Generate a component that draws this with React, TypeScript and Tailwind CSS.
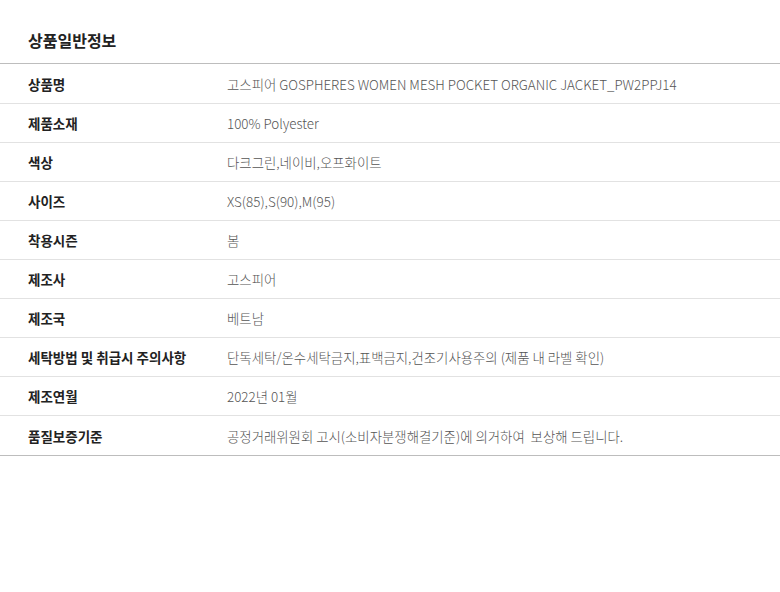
import React from 'react';

interface InfoRow {
  label: string;
  value: string;
}

const rows: InfoRow[] = [
  { label: '상품명', value: '고스피어 GOSPHERES WOMEN MESH POCKET ORGANIC JACKET_PW2PPJ14' },
  { label: '제품소재', value: '100% Polyester' },
  { label: '색상', value: '다크그린,네이비,오프화이트' },
  { label: '사이즈', value: 'XS(85),S(90),M(95)' },
  { label: '착용시즌', value: '봄' },
  { label: '제조사', value: '고스피어' },
  { label: '제조국', value: '베트남' },
  { label: '세탁방법 및 취급시 주의사항', value: '단독세탁/온수세탁금지,표백금지,건조기사용주의 (제품 내 라벨 확인)' },
  { label: '제조연월', value: '2022년 01월' },
  { label: '품질보증기준', value: '공정거래위원회 고시(소비자분쟁해결기준)에 의거하여  보상해 드립니다.' },
];

const App = () => {
  return (
    <div className="w-[780px] h-[592px] bg-white font-['Noto_Sans_CJK_KR','Noto_Sans',sans-serif]">
      <div className="pt-[30px]">
        <h2 className="px-7 pb-[12px] text-[16px] leading-[21px] font-bold text-[#222]">상품일반정보</h2>
        <div className="border-t border-b border-[#bdbdbd]">
          {rows.map((row, i) => (
            <div
              key={row.label}
              className={`flex items-center pt-px ${i === rows.length - 1 ? 'h-[40px]' : 'h-[39px]'} ${i > 0 ? 'border-t border-[#e2e2e2]' : ''}`}
            >
              <div className="w-[227px] shrink-0 pl-7 text-[13.5px] font-bold text-[#222] whitespace-nowrap">{row.label}</div>
              <div className="text-[13.4px] font-light text-[#555] whitespace-pre">{row.value}</div>
            </div>
          ))}
        </div>
      </div>
    </div>
  );
};

export default App;
